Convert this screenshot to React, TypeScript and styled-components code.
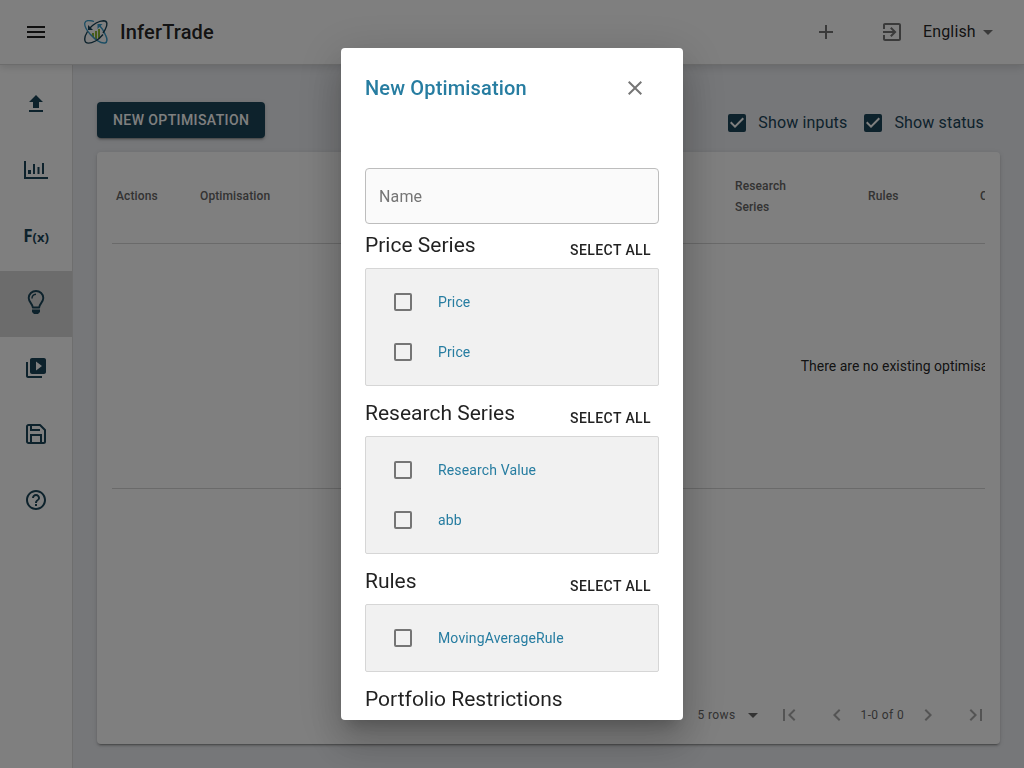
import React from "react";
import styled, { createGlobalStyle } from "styled-components";

const navy = "#1a4458";
const blue = "#277da1";
const ink = "rgba(0, 0, 0, 0.87)";
const muted = "rgba(0, 0, 0, 0.54)";

const GlobalStyle = createGlobalStyle`
  *, *::before, *::after { box-sizing: border-box; }
  body {
    margin: 0;
    background: #eceef2;
    color: ${ink};
    font-family: Roboto, "Liberation Sans", sans-serif;
    font-size: 16px;
  }
  button, input, select { font-family: inherit; }
`;

const Page = styled.div`
  display: flex;
  flex-direction: column;
  height: 100vh;
`;

const Header = styled.header`
  display: flex;
  align-items: center;
  flex: none;
  height: 65px;
  padding: 0 24px 1px 12px;
  background: #fff;
  border-bottom: 1px solid #d8d8d8;
  box-shadow: 0 2px 8px rgba(0, 0, 0, 0.14);
  z-index: 1;
`;

const IconButton = styled.button`
  display: flex;
  align-items: center;
  justify-content: center;
  flex: none;
  width: 48px;
  height: 48px;
  padding: 0;
  border: 0;
  border-radius: 50%;
  background: none;
  color: ${(p) => p.color || muted};
  cursor: pointer;
`;

const Brand = styled.a`
  display: flex;
  align-items: center;
  gap: 12px;
  margin-left: 24px;
  margin-right: auto;
  color: ${ink};
  font-size: 20px;
  font-weight: 500;
  letter-spacing: 0.0075em;
  text-decoration: none;
`;

const HeaderActions = styled.div`
  display: flex;
  align-items: center;
  gap: 18px;
`;

const SelectWrap = styled.span<{ $size: number; $gap: number }>`
  display: flex;
  align-items: center;
  font-size: ${(p) => p.$size}px;

  select {
    appearance: none;
    padding: 0;
    margin: 0;
    border: 0;
    background: none;
    color: inherit;
    font-size: inherit;
    letter-spacing: inherit;
    line-height: 24px;
  }
  svg { margin-left: ${(p) => p.$gap}px; pointer-events: none; }
`;

const Language = styled.div`
  margin-left: -11px;
  letter-spacing: 0.00938em;
  svg { color: ${muted}; }
`;

const Body = styled.div`
  display: flex;
  flex: 1;
  min-height: 0;
`;

const Sidebar = styled.nav`
  flex: none;
  width: 73px;
  padding-top: 8px;
  background: #fff;
  border-right: 1px solid #dcdcdc;
`;

const NavItem = styled.a<{ $active?: boolean }>`
  display: flex;
  align-items: center;
  justify-content: center;
  height: 66px;
  padding-bottom: 4px;
  color: ${navy};
  background: ${(p) => (p.$active ? "#d8d8d8" : "transparent")};
  text-decoration: none;
`;

const Fx = styled.span`
  font-family: "Noto Sans", sans-serif;
  font-size: 17px;
  font-weight: 700;
  line-height: 20px;
  small { font-size: 13px; }
`;

const Main = styled.main`
  display: flex;
  flex-direction: column;
  flex: 1;
  min-width: 0;
  padding: 37px 24px 24px;
`;

const Toolbar = styled.div`
  display: flex;
  align-items: flex-start;
  justify-content: space-between;
  height: 50px;
`;

const PrimaryButton = styled.button`
  height: 36px;
  padding: 0 16px;
  border: 0;
  border-radius: 4px;
  background: ${navy};
  color: #fff;
  font-size: 14px;
  font-weight: 500;
  letter-spacing: 0.02857em;
  text-transform: uppercase;
  box-shadow: 0 3px 1px -2px rgba(0, 0, 0, 0.2), 0 2px 2px rgba(0, 0, 0, 0.14),
    0 1px 5px rgba(0, 0, 0, 0.12);
`;

const Toggles = styled.div`
  display: flex;
  gap: 17px;
  padding: 9px 16px 0 0;
`;

const ToggleLabel = styled.label`
  display: flex;
  align-items: center;
  gap: 12px;
  color: ${navy};
  font-size: 16px;
  line-height: 24px;
  letter-spacing: 0.00938em;
`;

const CheckBox = styled.input.attrs({ type: "checkbox" })`
  appearance: none;
  flex: none;
  width: 18px;
  height: 18px;
  margin: 0;
  border: 2px solid #757575;
  border-radius: 2px;

  &:checked {
    border-color: ${navy};
    background: ${navy}
      url("data:image/svg+xml,%3Csvg xmlns='http://www.w3.org/2000/svg' viewBox='3 3 18 18'%3E%3Cpath fill='white' d='M10 17l-5-5 1.41-1.41L10 14.17l7.59-7.59L19 8z'/%3E%3C/svg%3E")
      border-box;
  }
`;

const Card = styled.section`
  display: flex;
  flex-direction: column;
  flex: 1;
  min-height: 0;
  padding: 15px;
  background: #fff;
  border-radius: 4px;
  box-shadow: 0 3px 1px -2px rgba(0, 0, 0, 0.2), 0 2px 2px rgba(0, 0, 0, 0.14),
    0 1px 5px rgba(0, 0, 0, 0.12);
`;

const TableScroll = styled.div`
  flex: 1;
  overflow: auto;
  scrollbar-width: none;
`;

const Table = styled.table`
  width: 1596px;
  border-collapse: collapse;
  table-layout: fixed;
`;

const HeadCell = styled.th<{ $width: number }>`
  width: ${(p) => p.$width}px;
  height: 76px;
  padding: 0 64px 16px 4px;
  border-bottom: 1px solid #d4d4d4;
  color: #666;
  font-size: 12px;
  font-weight: 500;
  line-height: 21px;
  letter-spacing: 0.01em;
  text-align: left;
  white-space: ${(p) => (p.$width > 100 ? "normal" : "nowrap")};
`;

const EmptyCell = styled.td`
  height: 245px;
  padding: 0;
  border-bottom: 1px solid #d4d4d4;
  font-size: 14px;
  text-align: center;
`;

const Pagination = styled.footer`
  display: flex;
  align-items: center;
  justify-content: flex-end;
  height: 28px;
  color: #666;
  font-size: 12px;
  letter-spacing: 0.03em;
`;

const PageButton = styled.button`
  display: flex;
  align-items: center;
  justify-content: center;
  width: 48px;
  height: 28px;
  padding: 0;
  border: 0;
  background: none;
  color: #a8a8a8;
`;

const PagerEdge = styled.div<{ $end?: boolean }>`
  display: flex;
  margin: ${(p) => (p.$end ? "0 -15px 0 0" : "0")};
`;

const Backdrop = styled.div`
  position: fixed;
  inset: 0;
  z-index: 10;
  display: flex;
  align-items: center;
  justify-content: center;
  padding: 48px;
  background: rgba(0, 0, 0, 0.5);
`;

const Dialog = styled.div`
  display: flex;
  flex-direction: column;
  width: 100%;
  max-width: 342px;
  height: 100%;
  background: #fff;
  border-radius: 4px;
  overflow: hidden;
  box-shadow: 0 11px 15px -7px rgba(0, 0, 0, 0.2), 0 24px 38px 3px rgba(0, 0, 0, 0.14),
    0 9px 46px 8px rgba(0, 0, 0, 0.12);
`;

const DialogHeader = styled.div`
  display: flex;
  align-items: center;
  justify-content: space-between;
  flex: none;
  padding: 16px 24px;
`;

const DialogTitle = styled.h2`
  margin: 0;
  color: ${blue};
  font-size: 20px;
  font-weight: 500;
  line-height: 32px;
  letter-spacing: 0.0075em;
`;

const DialogContent = styled.div`
  flex: 1;
  min-height: 0;
  overflow-y: auto;
  scrollbar-width: none;
  padding: 40px 24px 0;
`;

const NameField = styled.input`
  display: block;
  width: 100%;
  height: 56px;
  padding: 0 13px;
  border: 1px solid #bdbdbd;
  border-radius: 4px;
  background: #fafafa;
  color: ${ink};
  font-size: 16px;
  letter-spacing: 0.00938em;

  &::placeholder { color: #757575; opacity: 1; }
`;

const Group = styled.section`
  margin-bottom: 6px;
`;

const GroupHeader = styled.div`
  display: flex;
  justify-content: space-between;
  height: 44px;

  h3 {
    margin: 0;
    font-size: 21px;
    font-weight: 400;
    line-height: 42px;
  }
`;

const TextButton = styled.button`
  align-self: flex-end;
  height: 36px;
  padding: 0 8px;
  border: 0;
  background: none;
  color: ${ink};
  font-size: 14px;
  font-weight: 500;
  letter-spacing: 0.02857em;
  text-transform: uppercase;
`;

const OptionList = styled.div`
  padding: 8px 28px;
  border: 1px solid #d6d6d6;
  border-radius: 2px;
  background: #f1f1f1;
`;

const Option = styled.label`
  display: flex;
  align-items: center;
  gap: 26px;
  height: 50px;
  color: ${blue};
  font-size: 14px;
  letter-spacing: 0.01em;
`;

const Icon = ({ d, size = 24 }: { d: string; size?: number }) => (
  <svg width={size} height={size} viewBox="0 0 24 24" fill="currentColor" aria-hidden="true">
    <path d={d} />
  </svg>
);

const icons = {
  menu: "M3 18h18v-2H3v2zm0-5h18v-2H3v2zm0-7v2h18V6H3z",
  add: "M19 13h-6v6h-2v-6H5v-2h6V5h2v6h6v2z",
  exit: "M10.09 15.59L11.5 17l5-5-5-5-1.41 1.41L12.67 11H3v2h9.67l-2.58 2.59zM19 3H5c-1.11 0-2 .9-2 2v4h2V5h14v14H5v-4H3v4c0 1.1.89 2 2 2h14c1.1 0 2-.9 2-2V5c0-1.1-.9-2-2-2z",
  drop: "M7 10l5 5 5-5z",
  upload: "M9 16h6v-6h4l-7-7-7 7h4zm-4 2h14v2H5z",
  video: "M4 6H2v14c0 1.1.9 2 2 2h14v-2H4V6zm16-4H8c-1.1 0-2 .9-2 2v12c0 1.1.9 2 2 2h12c1.1 0 2-.9 2-2V4c0-1.1-.9-2-2-2zm-8 12.5v-9l6 4.5-6 4.5z",
  help: "M11 18h2v-2h-2v2zm1-16C6.48 2 2 6.48 2 12s4.48 10 10 10 10-4.48 10-10S17.52 2 12 2zm0 18c-4.41 0-8-3.59-8-8s3.59-8 8-8 8 3.59 8 8-3.59 8-8 8zm0-14c-2.21 0-4 1.79-4 4h2c0-1.1.9-2 2-2s2 .9 2 2c0 2-3 1.75-3 5h2c0-2.25 3-2.5 3-5 0-2.21-1.79-4-4-4z",
  close: "M19 6.41L17.59 5 12 10.59 6.41 5 5 6.41 10.59 12 5 17.59 6.41 19 12 13.41 17.59 19 19 17.59 13.41 12z",
  first: "M18.41 16.59L13.82 12l4.59-4.59L17 6l-6 6 6 6zM6 6h2v12H6z",
  last: "M5.59 7.41L10.18 12l-4.59 4.59L7 18l6-6-6-6zM16 6h2v12h-2z",
  prev: "M15.41 7.41L14 6l-6 6 6 6 1.41-1.41L10.83 12z",
  next: "M10 6L8.59 7.41 13.17 12l-4.58 4.59L10 18l6-6z",
};

const Logo = () => (
  <svg width="24" height="24" viewBox="0 0 24 24" fill="none" aria-hidden="true">
    <path d="M8 13h2v4H8zM11 11h2v8h-2zM14 9h2v9h-2z" fill="#8dbb35" />
    <path d="M10 1.500C5.500 0 1.500 0 .8 3c-.6 3 1.700 7 5.200 11" stroke="#3a9cc8" strokeWidth="1.300" />
    <path d="M6 14c5 5.500 11 9.500 15 9 2.500-.5 2.500-4 .5-8C20 11.500 18 8 15.500 5.500" stroke="#3a9cc8" strokeWidth="1.500" />
    <path d="M5.500 8.500C9 4.500 15 1 19.500.8c4 0 4.500 4 1.500 9.200l-2 3" stroke={navy} strokeWidth="1.400" />
    <path d="M3.500 11.500C1 15.500 0 19.500 1.500 22c2 2 6.500.8 10-1 3-1.700 5-3.500 7.500-6.500" stroke={navy} strokeWidth="1.400" />
    <path d="M4 5v5h5z" fill={navy} />
    <path d="M13.500 4H18.500l-5 5z" fill="#3a9cc8" />
  </svg>
);

const ChartIcon = () => (
  <svg width="24" height="24" viewBox="0 0 24 24" fill="currentColor" aria-hidden="true">
    <path d="M0 3h2v16h22v2H0zM4 12h3v4H4zM9 6h2v10H9zM13.500 9h2v7h-2zM18 5h2v11h-2z" />
  </svg>
);

const BulbIcon = () => (
  <svg width="24" height="24" viewBox="0 0 24 24" fill="none" stroke="currentColor" aria-hidden="true">
    <path
      d="M8.800 17.500C8.800 14 4.700 12 4.700 8c0-4 3.300-7 7.300-7s7.300 3 7.300 7c0 4-4.100 6-4.100 9.500z"
      strokeWidth="1.900"
      strokeLinejoin="round"
    />
    <path d="M8 8.500c0-2.300 1.500-4 4-4.200" strokeWidth="1.400" />
    <path d="M8 19.500h8V22l-2 2h-4l-2-2z" fill="currentColor" stroke="none" />
  </svg>
);

const SaveIcon = () => (
  <svg width="24" height="24" viewBox="0 0 24 24" fill="none" stroke="currentColor" strokeWidth="2" aria-hidden="true">
    <path d="M4.500 3H16l5 5v11.500c0 .8-.7 1.500-1.500 1.500h-15c-.8 0-1.500-.7-1.500-1.500v-15C3 3.700 3.700 3 4.500 3z" strokeLinejoin="round" />
    <path d="M7 3v5h9M7 21v-8h10v8" />
  </svg>
);

const navItems = [
  { label: "Upload", icon: <Icon d={icons.upload} /> },
  { label: "Charts", icon: <ChartIcon /> },
  { label: "Functions", icon: <Fx>F<small>(x)</small></Fx> },
  { label: "Optimisations", icon: <BulbIcon />, active: true },
  { label: "Library", icon: <Icon d={icons.video} /> },
  { label: "Saved", icon: <SaveIcon /> },
  { label: "Help", icon: <Icon d={icons.help} /> },
];

const columns = [
  { title: "Actions", width: 84 },
  { title: "Optimisation", width: 535 },
  { title: "Research Series", width: 133 },
  { title: "Rules", width: 112 },
  { title: "Created", width: 732 },
];

const groups = [
  { title: "Price Series", options: ["Price", "Price"] },
  { title: "Research Series", options: ["Research Value", "abb"] },
  { title: "Rules", options: ["MovingAverageRule"] },
];

export default function App() {
  return (
    <>
      <GlobalStyle />
      <Page>
        <Header>
          <IconButton color={ink} aria-label="Menu"><Icon d={icons.menu} /></IconButton>
          <Brand href="#"><Logo />InferTrade</Brand>
          <HeaderActions>
            <IconButton aria-label="Add"><Icon d={icons.add} /></IconButton>
            <IconButton aria-label="Log out"><Icon d={icons.exit} /></IconButton>
            <Language>
              <SelectWrap $size={16} $gap={0}>
                <select aria-label="Language"><option>English</option></select>
                <Icon d={icons.drop} />
              </SelectWrap>
            </Language>
          </HeaderActions>
        </Header>
        <Body>
          <Sidebar>
            {navItems.map((n) => (
              <NavItem key={n.label} href="#" aria-label={n.label} $active={n.active}>{n.icon}</NavItem>
            ))}
          </Sidebar>
          <Main>
            <Toolbar>
              <PrimaryButton>New Optimisation</PrimaryButton>
              <Toggles>
                <ToggleLabel><CheckBox defaultChecked />Show inputs</ToggleLabel>
                <ToggleLabel><CheckBox defaultChecked />Show status</ToggleLabel>
              </Toggles>
            </Toolbar>
            <Card>
              <TableScroll>
                <Table>
                  <thead>
                    <tr>
                      {columns.map((c) => (
                        <HeadCell key={c.title} $width={c.width}>{c.title}</HeadCell>
                      ))}
                    </tr>
                  </thead>
                  <tbody>
                    <tr><EmptyCell colSpan={columns.length}>There are no existing optimisations</EmptyCell></tr>
                  </tbody>
                </Table>
              </TableScroll>
              <Pagination>
                <SelectWrap $size={12} $gap={5}>
                  <select aria-label="Rows per page"><option>5 rows</option></select>
                  <Icon d={icons.drop} />
                </SelectWrap>
                <PagerEdge>
                  <PageButton aria-label="First page"><Icon d={icons.first} /></PageButton>
                  <PageButton aria-label="Previous page"><Icon d={icons.prev} /></PageButton>
                </PagerEdge>
                1-0 of 0
                <PagerEdge $end>
                  <PageButton aria-label="Next page"><Icon d={icons.next} /></PageButton>
                  <PageButton aria-label="Last page"><Icon d={icons.last} /></PageButton>
                </PagerEdge>
              </Pagination>
            </Card>
          </Main>
        </Body>
      </Page>
      <Backdrop>
        <Dialog role="dialog" aria-modal="true" aria-labelledby="dialog-title">
          <DialogHeader>
            <DialogTitle id="dialog-title">New Optimisation</DialogTitle>
            <IconButton aria-label="Close"><Icon d={icons.close} /></IconButton>
          </DialogHeader>
          <DialogContent>
            <NameField aria-label="Name" placeholder="Name" />
            {groups.map((g) => (
              <Group key={g.title}>
                <GroupHeader>
                  <h3>{g.title}</h3>
                  <TextButton>Select all</TextButton>
                </GroupHeader>
                <OptionList>
                  {g.options.map((o, i) => (
                    <Option key={i}><CheckBox />{o}</Option>
                  ))}
                </OptionList>
              </Group>
            ))}
            <GroupHeader><h3>Portfolio Restrictions</h3></GroupHeader>
          </DialogContent>
        </Dialog>
      </Backdrop>
    </>
  );
}
